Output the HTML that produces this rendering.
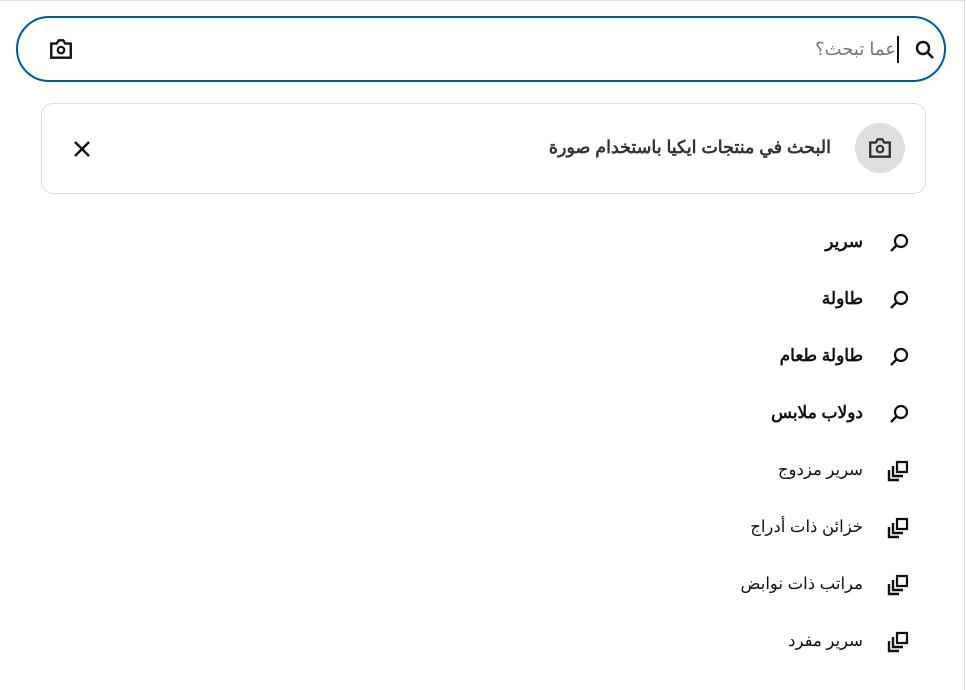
<!DOCTYPE html>
<html><head><meta charset="utf-8"><style>
body{margin:0;width:966px;height:689px;background:#fff;font-family:"Liberation Sans","Noto Sans CJK SC",sans-serif;position:relative;overflow:hidden}
.frame{position:absolute;left:0;top:0;width:964px;height:689px;border-top:1px solid #ddd;border-right:1px solid #ddd}
.bar{position:absolute;left:16px;top:16px;width:926px;height:62px;border:2px solid #0058a3;border-radius:33px}
.ph{position:absolute;right:70px;top:39px;font-size:18px;color:#767676;direction:rtl}
.cursor{position:absolute;left:897px;top:36px;width:2px;height:27px;background:#111}
.card{position:absolute;left:41px;top:103px;width:883px;height:89px;border:1px solid #ddd;border-radius:12px}
.circ{position:absolute;left:855px;top:123px;width:50px;height:50px;border-radius:50%;background:#dfdfdf}
.ct{position:absolute;right:135px;top:137px;font-size:17.5px;font-weight:bold;color:#333;direction:rtl}
.it{position:absolute;right:103px;font-size:16.5px;color:#111;direction:rtl}
.b{font-weight:bold;font-size:17px}
svg{position:absolute}
</style></head><body>
<div class="frame"></div>
<div class="bar"></div>
<svg style="left:914px;top:39px" width="22" height="22" viewBox="0 0 22 22"><circle cx="9" cy="9" r="6" fill="none" stroke="#111" stroke-width="2.4"/><path d="M13.5 13.5L19 19" stroke="#111" stroke-width="2.6"/></svg>
<div class="cursor"></div>
<div class="ph">عما تبحث؟</div>
<svg style="left:48px;top:37px" width="26" height="24" viewBox="0 0 24 22"><path d="M3 6h5l2-3h4l2 3h5v13H3z" fill="none" stroke="#111" stroke-width="2.2"/><circle cx="12" cy="12" r="3" fill="none" stroke="#111" stroke-width="2"/></svg>
<div class="card"></div>
<div class="circ"></div>
<svg style="left:867px;top:136px" width="26" height="24" viewBox="0 0 24 22"><path d="M3 6h5l2-3h4l2 3h5v13H3z" fill="none" stroke="#333" stroke-width="2.2"/><circle cx="12" cy="12" r="3" fill="none" stroke="#333" stroke-width="2"/></svg>
<div class="ct">البحث في منتجات ايكيا باستخدام صورة</div>
<svg style="left:73px;top:140px" width="18" height="18" viewBox="0 0 18 18"><path d="M2 2L16 16M16 2L2 16" stroke="#111" stroke-width="2.4"/></svg>

<svg style="left:889px;top:232px" width="22" height="22" viewBox="0 0 22 22"><circle cx="12" cy="9" r="6" fill="none" stroke="#111" stroke-width="2.2"/><path d="M7.5 13.5L2 19" stroke="#111" stroke-width="2.4"/></svg>
<div class="it b" style="top:232px">سرير</div>
<svg style="left:889px;top:289px" width="22" height="22" viewBox="0 0 22 22"><circle cx="12" cy="9" r="6" fill="none" stroke="#111" stroke-width="2.2"/><path d="M7.5 13.5L2 19" stroke="#111" stroke-width="2.4"/></svg>
<div class="it b" style="top:289px">طاولة</div>
<svg style="left:889px;top:346px" width="22" height="22" viewBox="0 0 22 22"><circle cx="12" cy="9" r="6" fill="none" stroke="#111" stroke-width="2.2"/><path d="M7.5 13.5L2 19" stroke="#111" stroke-width="2.4"/></svg>
<div class="it b" style="top:346px">طاولة طعام</div>
<svg style="left:889px;top:403px" width="22" height="22" viewBox="0 0 22 22"><circle cx="12" cy="9" r="6" fill="none" stroke="#111" stroke-width="2.2"/><path d="M7.5 13.5L2 19" stroke="#111" stroke-width="2.4"/></svg>
<div class="it b" style="top:403px">دولاب ملابس</div>

<svg style="left:887px;top:459px" width="24" height="24" viewBox="0 0 24 24"><path d="M10 3h10v10h-10z" fill="none" stroke="#111" stroke-width="2.2"/><path d="M6 7v10h10M2 11v10h10" fill="none" stroke="#111" stroke-width="2.4"/></svg>
<div class="it" style="top:460px">سرير مزدوج</div>
<svg style="left:887px;top:516px" width="24" height="24" viewBox="0 0 24 24"><path d="M10 3h10v10h-10z" fill="none" stroke="#111" stroke-width="2.2"/><path d="M6 7v10h10M2 11v10h10" fill="none" stroke="#111" stroke-width="2.4"/></svg>
<div class="it" style="top:517px">خزائن ذات أدراج</div>
<svg style="left:887px;top:573px" width="24" height="24" viewBox="0 0 24 24"><path d="M10 3h10v10h-10z" fill="none" stroke="#111" stroke-width="2.2"/><path d="M6 7v10h10M2 11v10h10" fill="none" stroke="#111" stroke-width="2.4"/></svg>
<div class="it" style="top:574px">مراتب ذات نوابض</div>
<svg style="left:887px;top:630px" width="24" height="24" viewBox="0 0 24 24"><path d="M10 3h10v10h-10z" fill="none" stroke="#111" stroke-width="2.2"/><path d="M6 7v10h10M2 11v10h10" fill="none" stroke="#111" stroke-width="2.4"/></svg>
<div class="it" style="top:631px">سرير مفرد</div>
</body></html>
